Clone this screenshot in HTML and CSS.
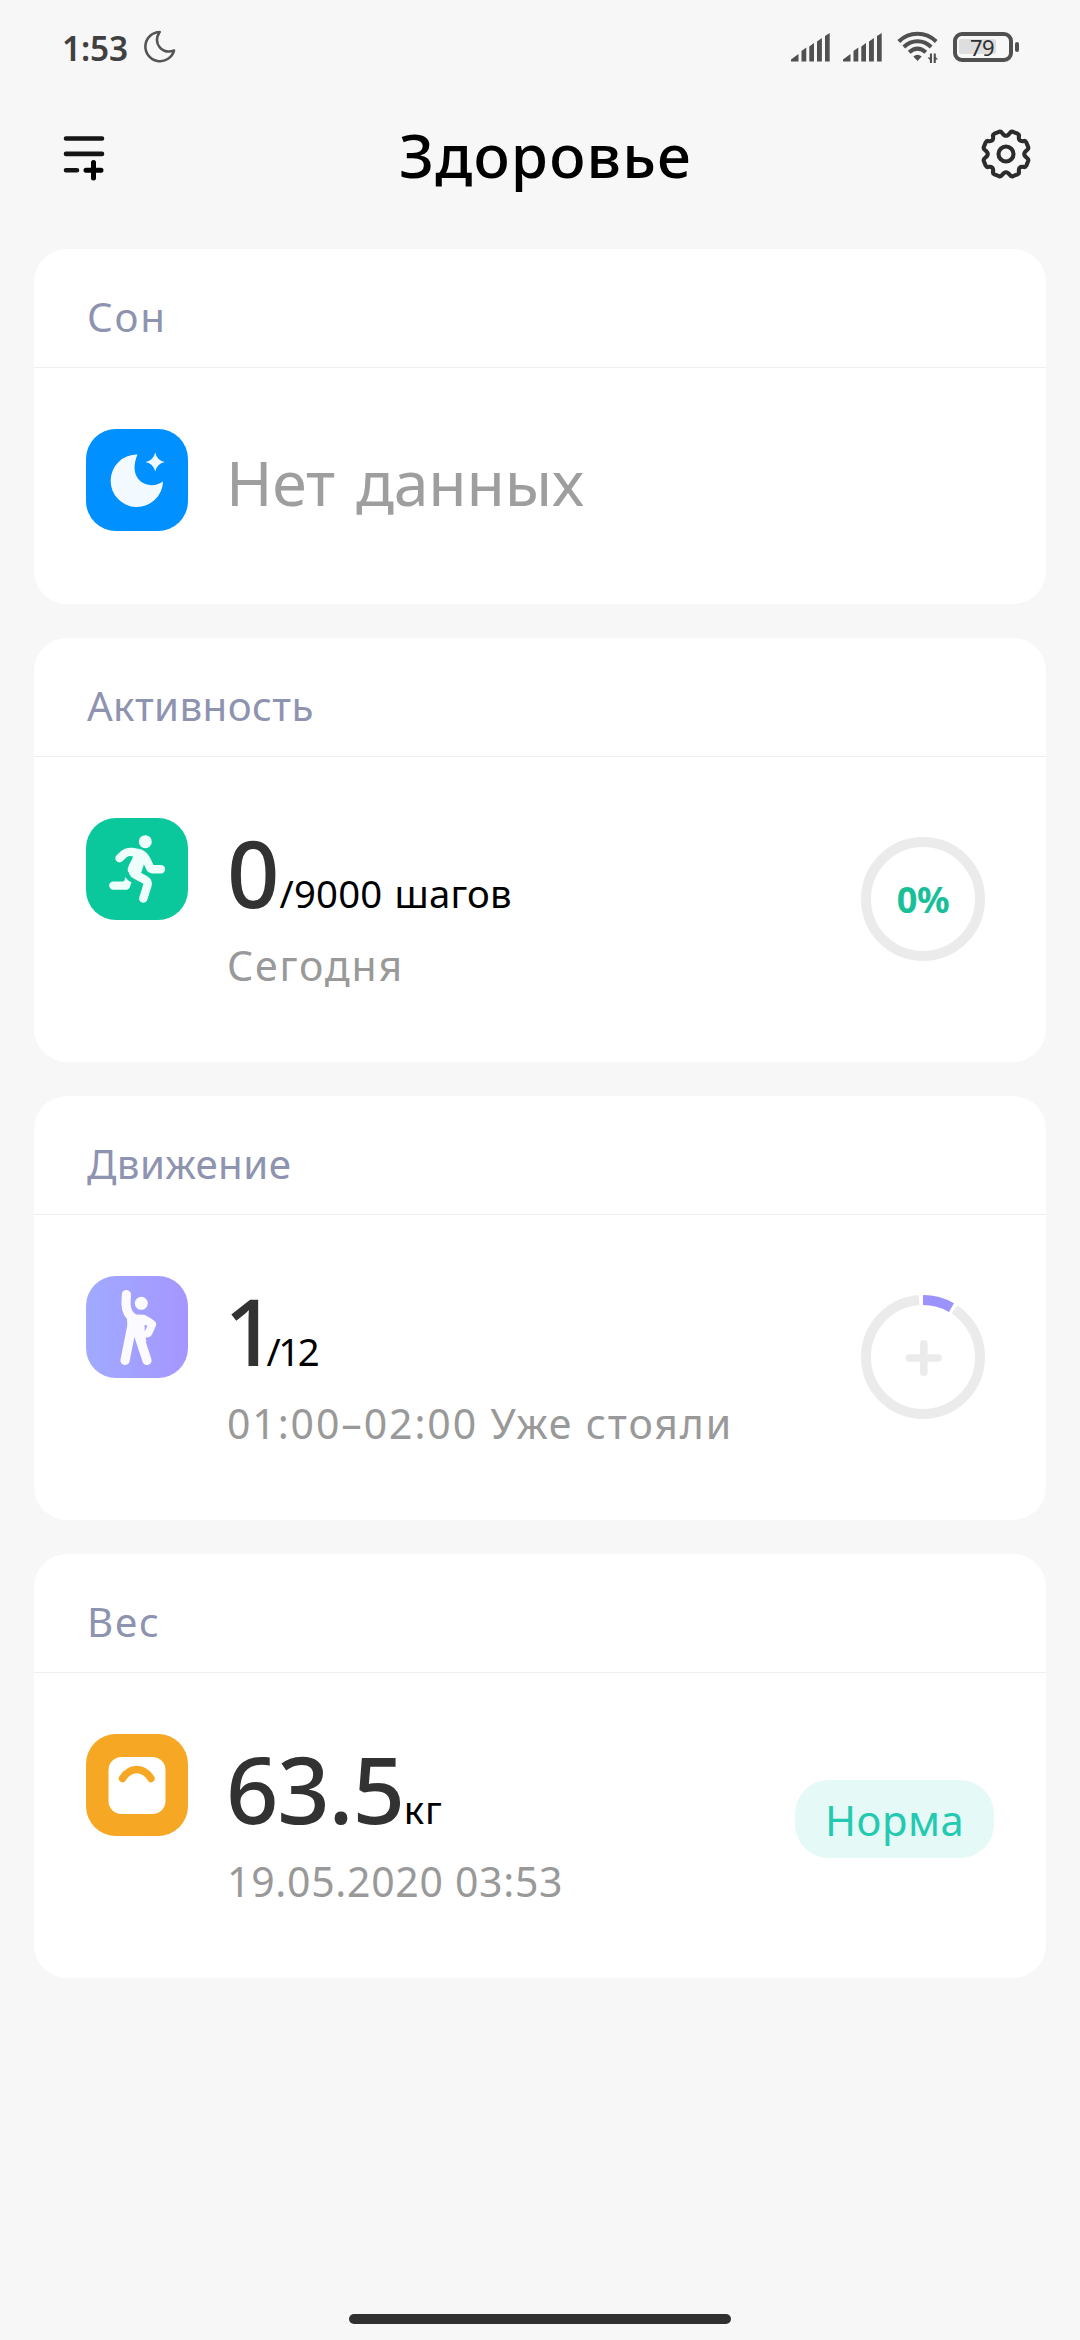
FILE: index.html
```html
<!DOCTYPE html>
<html lang="ru">
<head>
<meta charset="utf-8">
<title>Здоровье</title>
<link rel="stylesheet" href="styles.css">
</head>
<body>
<div class="statusbar">
  <span class="clock">1:53</span>
  <svg class="dnd" width="34" height="34" viewBox="0 0 34 34"><path d="M17 2.2A14.6 14.6 0 1 0 31.3 20.8C20 24.5 9.500 14.500 16.800 2.200Z" transform="translate(-.3 -.2)"/></svg>
  <div class="indicators">
    <svg class="signal" width="39" height="29" viewBox="0 0 39 29"><path d="M0 28.500V26.500L7.500 21V28.500ZM10.500 28.500V18L15.300 14.500V28.500ZM18.300 28.500V13.500L23 10V28.500ZM26 28.500V8.500L30.900 5V28.500ZM34 28.500V3L38.700 0V28.500Z"/></svg>
    <svg class="signal second" width="39" height="29" viewBox="0 0 39 29"><path d="M0 28.500V26.500L7.500 21V28.500ZM10.500 28.500V18L15.300 14.500V28.500ZM18.300 28.500V13.500L23 10V28.500ZM26 28.500V8.500L30.900 5V28.500ZM34 28.500V3L38.700 0V28.500Z"/></svg>
    <svg class="wifi" width="42" height="33" viewBox="0 0 42 33">
      <g class="waves"><path d="M1.800 10.500C12.500 .3 28.500 .3 39.200 10.500"/><path d="M6.800 16C14.800 8.300 26.200 8.300 34.200 16"/><path d="M12.200 21.300C17.500 16.500 23.500 16.500 28.800 21.300"/></g>
      <path d="M16.300 25.500Q20.500 22 24.700 25.500L20.500 30ZM35 22.500V32H32.900V29L30.500 26.500H32.900V22.500ZM36.700 32V22.500H38.800V26L41 28.500H38.800V32Z"/>
    </svg>
    <div class="battery"><span class="battery-fill"></span><span class="battery-text">79</span></div>
    <span class="battery-tip"></span>
  </div>
</div>
<header class="header">
  <svg class="menu" width="44" height="48" viewBox="0 0 44 48"><path class="dark" d="M3 5.500H39M3 20.900H39M3 37.200H14"/><path d="M23 37.200H38M30.500 29.500V45"/></svg>
  <h1 class="title">Здоровье</h1>
  <svg class="gear" width="52" height="52" viewBox="-26 -26 52 52">
    <path d="M-3.900 -21Q0 -15.500 3.900 -21Q5 -22.800 7 -22.200L11.600 -20.300Q13.500 -19.300 12.900 -17.500Q12.200 -12.200 17.500 -12.900Q19.300 -13.500 20.300 -11.600L22.200 -7Q22.800 -5 21 -3.900Q15.500 0 21 3.900Q22.800 5 22.200 7L20.300 11.600Q19.300 13.500 17.500 12.900Q12.200 12.200 12.900 17.500Q13.500 19.300 11.600 20.300L7 22.200Q5 22.800 3.900 21Q0 15.500 -3.900 21Q-5 22.800 -7 22.200L-11.600 20.300Q-13.500 19.300 -12.900 17.500Q-12.200 12.200 -17.500 12.900Q-19.300 13.500 -20.300 11.600L-22.200 7Q-22.800 5 -21 3.900Q-15.500 0 -21 -3.900Q-22.800 -5 -22.200 -7L-20.300 -11.600Q-19.300 -13.500 -17.500 -12.900Q-12.200 -12.200 -12.900 -17.500Q-13.500 -19.300 -11.600 -20.300L-7 -22.200Q-5 -22.800 -3.900 -21Z"/>
    <circle r="7.500"/>
  </svg>
</header>
<main class="cards">
  <section class="card short">
    <h2 class="card-title spaced">Сон</h2>
    <div class="card-body">
      <svg class="icon sleep" width="102" height="102" viewBox="0 0 102 102">
        <path d="M51.500 25.600A26.200 26.200 0 1 0 77 52.500C63 62.500 40.500 51.500 51.500 25.600Z"/>
        <path d="M69.200 23.500Q70.800 31.200 78.600 33Q70.800 34.800 69.200 42.500Q67.600 34.800 59.600 33Q67.600 31.200 69.200 23.500Z"/>
      </svg>
      <div class="info"><p class="empty">Нет данных</p></div>
    </div>
  </section>
  <section class="card">
    <h2 class="card-title">Активность</h2>
    <div class="card-body">
      <svg class="icon steps" width="102" height="102" viewBox="0 0 102 102">
        <circle cx="59.300" cy="23.700" r="6.500"/>
        <path class="limb" d="M33.500 40.200L38 36Q41.500 33.300 46 34L54 35.500Q58 37 61 43L64 49.500Q65 51.200 67.500 51.200H75M47 51Q46 55 50 57L58.500 61.500Q62.500 63.700 61.500 67L57.300 80.500M27.300 67.600H40"/>
        <path d="M49 33L61 38L63 48L58 46L54.500 57L42 54Q41 51 43 47L48 37ZM39 59Q42 63 45.500 64.500Q43.500 71.500 39 71.600L36 64Q39 64 39 59Z"/>
      </svg>
      <div class="info">
        <p class="value"><span class="num">0</span><span class="unit">/9000 шагов</span></p>
        <p class="sub wide">Сегодня</p>
      </div>
      <div class="ring"><span class="percent">0%</span></div>
    </div>
  </section>
  <section class="card">
    <h2 class="card-title">Движение</h2>
    <div class="card-body">
      <svg class="icon stand" width="102" height="102" viewBox="0 0 102 102">
        <circle cx="55.300" cy="27.300" r="6.500"/>
        <path class="limb" d="M40.400 18.500L40 28Q40.500 38 47 42M45.500 52L39 84.500M51 54L61 84.500"/>
        <path d="M42 35L48 38.500L58 38.800Q61 39.500 68.500 45Q71 47 69.800 50L66 58.500Q64 62 59.500 61.500L60.500 66L48.700 60L41 64Q41.500 48 41 44Z"/>
        <path class="gap" d="M58.500 49Q62.500 48.500 60.500 52L58.800 55.500Z"/>
      </svg>
      <div class="info">
        <p class="value one"><span class="num">1</span><span class="unit">/12</span></p>
        <p class="sub range">01:00–02:00 Уже стояли</p>
      </div>
      <svg class="progress" width="124" height="124" viewBox="-62 -62 124 124">
        <circle class="track" r="57"/>
        <path class="mask" d="M-4 -56.900A57 57 0 0 1 31.500 -47.500"/>
        <path class="done" d="M0 -57A57 57 0 0 1 28.500 -49.400"/>
        <path class="plus" d="M-13.500 1H15M.8 -13.300V15.200"/>
      </svg>
    </div>
  </section>
  <section class="card">
    <h2 class="card-title spaced">Вес</h2>
    <div class="card-body">
      <svg class="icon weight" width="102" height="102" viewBox="0 0 102 102">
        <rect x="22.500" y="23" width="57" height="57" rx="13"/>
        <path class="dial" d="M36.500 44.500C44 32.500 57.500 32.500 65 44.500"/>
      </svg>
      <div class="info">
        <p class="value kilos"><span class="num">63.5</span><span class="unit">кг</span></p>
        <p class="sub date">19.05.2020 03:53</p>
      </div>
      <span class="pill">Норма</span>
    </div>
  </section>
</main>
<footer class="nav"><span class="nav-bar"></span></footer>
</body>
</html>
```
FILE: styles.css
```css
* { box-sizing: border-box; }
body {
  margin: 0;
  width: 1080px;
  height: 2340px;
  display: flex;
  flex-direction: column;
  background: #f7f7f7;
  color: #000;
  font-family: "Noto Sans", sans-serif;
}
h1, h2, p { margin: 0; font-weight: 400; white-space: nowrap; }
svg { display: block; flex: none; overflow: visible; }

.statusbar {
  height: 94px;
  display: flex;
  align-items: center;
  padding: 0 61px 0 62px;
}
.clock {
  width: 81px;
  padding-top: 1px;
  font-size: 33.4px;
  font-weight: 600;
  letter-spacing: -0.1px;
  color: #404040;
}
.dnd { fill: none; stroke: #555; stroke-width: 2.6; stroke-linejoin: round; }
.indicators { display: flex; align-items: center; margin-left: auto; }
.signal, .wifi { fill: #505050; }
.second { margin-left: 13px; }
.wifi { margin-left: 15px; margin-right: 14px; }
.waves { fill: none; stroke: #505050; stroke-width: 4; }
.battery {
  position: relative;
  display: flex;
  align-items: center;
  justify-content: center;
  width: 60px;
  height: 30px;
  border: 4px solid #505050;
  border-radius: 9px;
}
.battery-fill {
  position: absolute;
  left: 2px;
  top: 3px;
  width: 37px;
  height: 15px;
  border-radius: 2px;
  background: #dedede;
}
.battery-text {
  position: relative;
  font-size: 22px;
  line-height: 22px;
  letter-spacing: -0.6px;
  margin-right: 2px;
  color: #303030;
}
.battery-tip { width: 4px; height: 10px; margin-left: 2px; border-radius: 2px; background: #505050; }

.header {
  height: 155px;
  display: flex;
  align-items: flex-start;
  justify-content: space-between;
  padding: 0 48px 0 63px;
}
.menu {
  margin-top: 39px;
  fill: none;
  stroke: #000;
  stroke-width: 5;
  stroke-linecap: round;
}
.menu .dark { stroke: #151515; stroke-width: 4.6; }
.title {
  font-size: 60.2px;
  font-weight: 500;
  line-height: 82px;
  letter-spacing: 1.2px;
  margin: 20px 0 0 4px;
}
.gear { margin-top: 34px; fill: none; stroke: #2c2c2c; stroke-width: 4.1; stroke-linejoin: round; }

.cards { display: flex; flex-direction: column; gap: 34px; padding: 0 34px; }
.card { height: 424px; border-radius: 33px; background: #fff; }
.short { height: 355px; }
.card-title {
  height: 119px;
  padding: 17px 0 0 53px;
  border-bottom: 1px solid #efefef;
  font-size: 40.3px;
  line-height: 101px;
  letter-spacing: 0.4px;
  color: #8e94b0;
}
.spaced { letter-spacing: 1.8px; }
.card-body { display: flex; align-items: flex-start; padding: 61px 61px 0 52px; }
.icon { border-radius: 30px; fill: #fff; }
.sleep { background: #0090ff; fill: #f2faff; }
.steps { background: #0bc89c; fill: #eefffb; }
.stand { background: linear-gradient(90deg, #a0aaff, #a596ff); fill: #fbfaff; }
.weight { background: #f6a724; }
.limb { fill: none; stroke-width: 8.4; stroke-linecap: round; stroke-linejoin: round; }
.steps .limb { stroke: #eefffb; }
.stand .limb { stroke: #fbfaff; stroke-width: 9.2; }
.gap { fill: #a5a0ff; }
.dial { fill: none; stroke: #f6a724; stroke-width: 7.4; stroke-linecap: round; }

.info { flex: 1; padding: 3px 0 0 38px; }
.empty {
  margin-top: 10px;
  font-size: 62.6px;
  line-height: 80px;
  letter-spacing: -0.2px;
  word-spacing: 5px;
  color: #9e9e9e;
}
.value { font-size: 0; height: 100px; line-height: 103px; padding-left: 1px; }
.num { font-size: 91.8px; font-weight: 500; color: #323232; }
.unit { font-size: 38.3px; letter-spacing: 0.2px; word-spacing: 2px; }
.one { padding-left: 0; margin-left: -2px; }
.one .num { letter-spacing: -10px; }
.one .unit { letter-spacing: -2.4px; }
.kilos { padding-left: 0; }
.kilos .num { letter-spacing: -1.2px; }
.kilos .unit { letter-spacing: 1px; }
.sub {
  margin-top: 16px;
  font-size: 41px;
  line-height: 56px;
  color: #999;
}
.wide { padding-left: 1px; letter-spacing: 1.85px; }
.range { padding-left: 1px; letter-spacing: 1.9px; }
.date { padding-left: 1px; letter-spacing: 0.7px; }

.ring {
  display: flex;
  align-items: center;
  justify-content: center;
  width: 124px;
  height: 124px;
  margin-top: 19px;
  border: 10px solid #ebebeb;
  border-radius: 50%;
}
.percent { font-size: 36.2px; font-weight: 700; line-height: 50px; letter-spacing: -0.3px; color: #19bf98; }
.progress { margin-top: 19px; fill: none; }
.track { stroke: #ebebeb; stroke-width: 10; }
.mask { stroke: #fff; stroke-width: 12; }
.done { stroke: #9c92fb; stroke-width: 10; }
.plus { stroke: #ebebeb; stroke-width: 7.6; stroke-linecap: round; }
.pill {
  width: 199px;
  height: 78px;
  margin: 46px -9px 0 0;
  padding-left: 30px;
  border-radius: 34px;
  background: #e5f9f6;
  font-size: 41.7px;
  line-height: 79px;
  letter-spacing: 0.6px;
  color: #24c9b2;
}
.nav { display: flex; justify-content: center; margin-top: auto; padding-bottom: 16px; }
.nav-bar { width: 382px; height: 10px; border-radius: 5px; background: #303030; }
```
